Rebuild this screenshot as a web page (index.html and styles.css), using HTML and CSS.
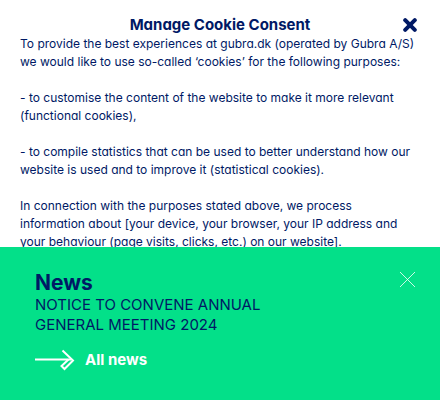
FILE: index.html
```html
<!DOCTYPE html>
<html lang="en">
<head>
<meta charset="utf-8">
<meta name="viewport" content="width=device-width, initial-scale=1">
<title>Gubra</title>
<link rel="stylesheet" href="styles.css">
</head>
<body>
<section class="consent" aria-labelledby="consent-title">
  <header class="consent-header">
    <h2 class="consent-title" id="consent-title">Manage Cookie Consent</h2>
    <button class="icon-button" type="button" aria-label="Close cookie consent">
      <svg class="consent-close" viewBox="0 0 14 14" aria-hidden="true"><path d="M2.2 2.2 11.8 11.8M11.8 2.2 2.2 11.8"/></svg>
    </button>
  </header>
  <div class="consent-text">
    <p>To provide the best experiences at gubra.dk (operated by Gubra A/S)<br>we would like to use so-called ‘cookies’ for the following purposes:</p>
    <p>- to customise the content of the website to make it more relevant<br>(functional cookies),</p>
    <p>- to compile statistics that can be used to better understand how our<br>website is used and to improve it (statistical cookies).</p>
    <p>In connection with the purposes stated above, we process<br>information about [your device, your browser, your IP address and<br>your behaviour (page visits, clicks, etc.) on our website].</p>
  </div>
</section>
<aside class="news" aria-labelledby="news-title">
  <div class="news-body">
    <h2 class="news-title" id="news-title">News</h2>
    <p class="news-text">NOTICE TO CONVENE ANNUAL GENERAL MEETING 2024</p>
    <a class="news-link" href="#">
      <svg class="arrow" viewBox="0 0 40 22" aria-hidden="true"><path d="M0 10.5H36"/><path d="M27.5 1.5 38 11.5 29.5 20 26.5 17 33.5 10.5"/></svg>
      All news
    </a>
  </div>
  <button class="icon-button" type="button" aria-label="Close news">
    <svg class="news-close" viewBox="0 0 15 15" aria-hidden="true"><path d="M0 0 15 15M15 0 0 15"/></svg>
  </button>
</aside>
</body>
</html>
```
FILE: styles.css
```css
* {
  box-sizing: border-box;
}

body {
  display: flex;
  flex-direction: column;
  height: 100vh;
  margin: 0;
  background: #fff;
  color: #001965;
  font-family: Inter, "Liberation Sans", sans-serif;
  font-feature-settings: "cv11";
}

h2,
p {
  margin: 0;
}

svg {
  display: block;
  fill: none;
  stroke: currentColor;
}

.icon-button {
  padding: 0;
  border: 0;
  background: none;
  color: inherit;
  cursor: pointer;
}

.consent {
  flex: 1;
  min-height: 0;
  padding: 15px 20px 0;
  overflow: hidden;
}

.consent-header {
  display: grid;
  grid-template-columns: 1fr auto 1fr;
  align-items: center;
}

.consent-title {
  grid-column: 2;
  font-size: 15px;
  font-weight: 700;
  line-height: 20px;
}

.consent-header .icon-button {
  justify-self: end;
  padding: 0 3px;
}

.consent-close {
  width: 14px;
  height: 14px;
  stroke-width: 4;
  stroke-linecap: round;
}

.consent-text {
  display: grid;
  gap: 18px;
  font-size: 12px;
  line-height: 18px;
}

.news {
  display: flex;
  justify-content: space-between;
  align-items: flex-start;
  padding: 24px 25px 28px 35px;
  background: #03e089;
}

.news-body {
  max-width: 240px;
}

.news-title {
  font-size: 21px;
  font-weight: 700;
  line-height: 24px;
}

.news-text {
  font-size: 15px;
  line-height: 20px;
}

.news-link {
  display: flex;
  align-items: center;
  gap: 10px;
  margin-top: 13px;
  color: #fff;
  font-size: 15px;
  font-weight: 700;
  line-height: 24px;
  text-decoration: none;
}

.arrow {
  width: 40px;
  height: 22px;
  stroke-width: 2;
}

.news-close {
  width: 15px;
  height: 15px;
  margin-top: 1px;
  color: #fff;
  stroke-width: 0.8;
}
```
